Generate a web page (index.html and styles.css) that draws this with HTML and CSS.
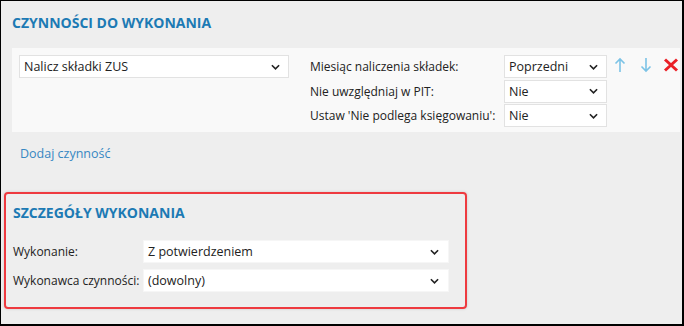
FILE: index.html
```html
<!DOCTYPE html>
<html lang="pl">
<head>
    <meta charset="UTF-8">
    <title>Czynności do wykonania</title>
    <link rel="stylesheet" href="styles.css">
</head>
<body>
  <div class="page">
    <section class="actions">
      <h2 class="section-title">CZYNNOŚCI DO WYKONANIA</h2>

      <div class="action-row">
        <div class="select select-main">
          <span>Nalicz składki ZUS</span>
          <svg class="chevron" viewBox="0 0 10 6"><path d="M1 1l4 4 4-4"/></svg>
        </div>

        <div class="params">
          <label>Miesiąc naliczenia składek:</label>
          <div class="select select-small">
            <span>Poprzedni</span>
            <svg class="chevron" viewBox="0 0 10 6"><path d="M1 1l4 4 4-4"/></svg>
          </div>
          <label>Nie uwzględniaj w PIT:</label>
          <div class="select select-small">
            <span>Nie</span>
            <svg class="chevron" viewBox="0 0 10 6"><path d="M1 1l4 4 4-4"/></svg>
          </div>
          <label>Ustaw 'Nie podlega księgowaniu':</label>
          <div class="select select-small">
            <span>Nie</span>
            <svg class="chevron" viewBox="0 0 10 6"><path d="M1 1l4 4 4-4"/></svg>
          </div>
        </div>

        <div class="tools">
          <svg class="tool" viewBox="0 0 14 16"><path class="arrow" d="M7 15V2M2.5 6.5L7 2l4.5 4.5"/></svg>
          <svg class="tool" viewBox="0 0 14 16"><path class="arrow" d="M7 1v13M2.5 9.5L7 14l4.5-4.5"/></svg>
          <svg class="tool tool-remove" viewBox="0 0 16 16"><path class="remove" d="M2 2.5l12 11M14 2.5l-12 11"/></svg>
        </div>
      </div>

      <a class="add-link" href="#">Dodaj czynność</a>
    </section>

    <section class="details">
      <h2 class="section-title">SZCZEGÓŁY WYKONANIA</h2>
      <div class="details-grid">
        <label>Wykonanie:</label>
        <div class="select select-wide">
          <span>Z potwierdzeniem</span>
          <svg class="chevron" viewBox="0 0 10 6"><path d="M1 1l4 4 4-4"/></svg>
        </div>
        <label>Wykonawca czynności:</label>
        <div class="select select-wide">
          <span>(dowolny)</span>
          <svg class="chevron" viewBox="0 0 10 6"><path d="M1 1l4 4 4-4"/></svg>
        </div>
      </div>
    </section>
  </div>
</body>
</html>
```

FILE: styles.css
```css
:root {
--niebieski: #1c7ab4;
--link: #3787c2;
--tlo: #eeeeee;
--panel: #f9f9f9;
--ramka: #e2e2e2;
--czerwony: #ee3a3f;
--tekst: #222222;
}

*,
*::before,
*::after {
box-sizing: border-box;
}

body {
margin: 0;
font-family: "Open Sans", "Noto Sans", sans-serif;
font-size: 12px;
color: var(--tekst);
}

.page {
width: 684px;
height: 326px;
background-color: var(--tlo);
border: 1px solid #000;
border-right-width: 2px;
border-bottom-width: 2px;
overflow: hidden;
}

.section-title {
margin: 0;
font-size: 14px;
font-weight: 700;
color: var(--niebieski);
line-height: 20px;
}

.actions {
padding: 12px 2px 0 11px;
}

.actions .section-title {
margin-bottom: 15px;
}

.action-row {
display: flex;
align-items: flex-start;
background-color: var(--panel);
padding: 7px 0 5px 7px;
}

.action-row > * {
flex-shrink: 0;
}

.select {
display: flex;
align-items: center;
justify-content: space-between;
background-color: #fff;
border: 1px solid var(--ramka);
padding: 0 8px 0 4px;
height: 23px;
font-size: 12.5px;
}

.chevron {
width: 9px;
height: 6px;
fill: none;
stroke: #222;
stroke-width: 1.8;
}

.select-main {
width: 270px;
}

.params {
display: grid;
grid-template-columns: 194px 103px;
row-gap: 1.5px;
margin-left: 21px;
}

label {
white-space: nowrap;
}

.params label {
display: flex;
align-items: center;
height: 23px;
}

.select-small {
width: 103px;
}

.tools {
display: flex;
gap: 12px;
margin-left: 6px;
padding-top: 2px;
}

.tool {
width: 14px;
height: 16px;
fill: none;
flex-shrink: 0;
}

.tool-remove {
width: 16px;
margin-left: -2px;
}

.arrow {
stroke: #7cc3e6;
stroke-width: 1.6;
}

.remove {
stroke: #ea2027;
stroke-width: 3;
}

.add-link {
display: block;
margin: 13px 0 0 8px;
color: var(--link);
font-size: 12.5px;
text-decoration: none;
line-height: 18px;
}

.details {
width: 463px;
margin: 29px 0 0 3px;
border: 2px solid var(--czerwony);
border-radius: 4px;
box-shadow: 0 0 3px rgba(0, 0, 0, 0.15);
padding: 9px 16px 15px 7px;
}

.details .section-title {
margin-bottom: 17px;
}

.details-grid {
display: grid;
grid-template-columns: 130px 1fr;
row-gap: 6px;
}

.details-grid label {
display: flex;
align-items: center;
height: 23px;
}

.details-grid .select {
border-color: #f6f6f6;
padding-right: 9px;
}
```
